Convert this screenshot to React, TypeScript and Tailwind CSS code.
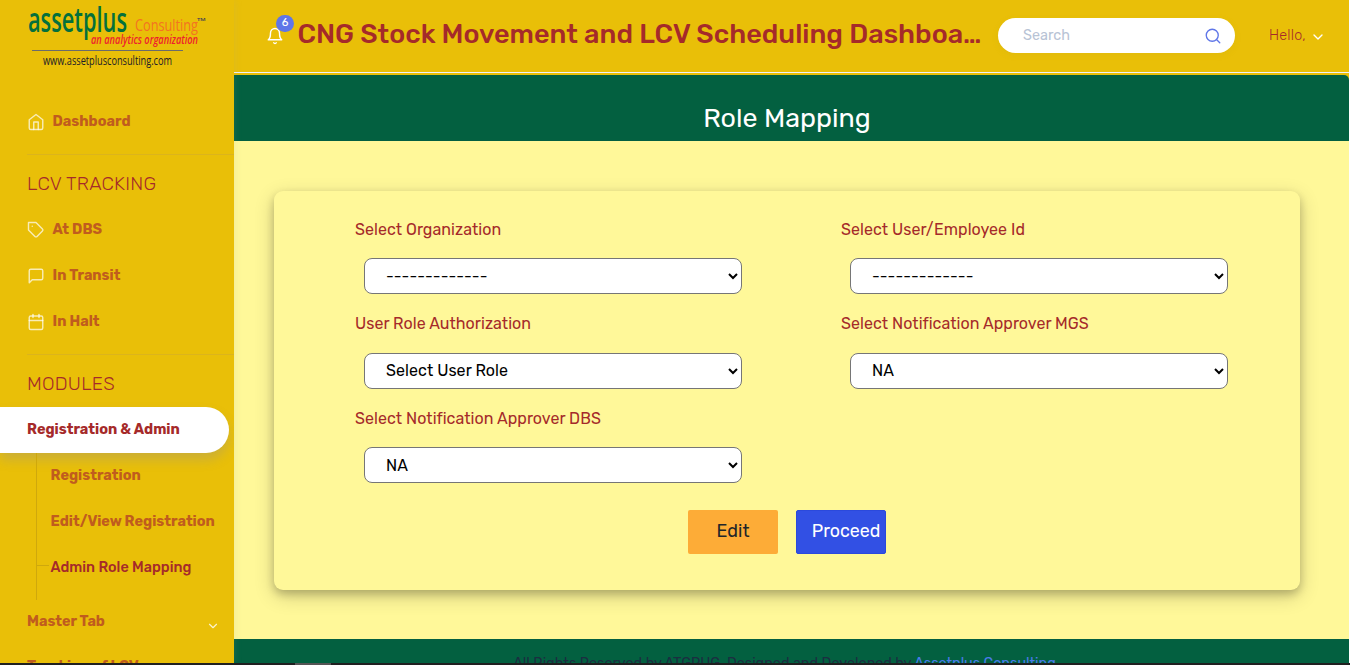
import type { ReactNode } from 'react';
import { FiBell, FiCalendar, FiChevronDown, FiHome, FiMessageSquare, FiSearch, FiTag } from 'react-icons/fi';

function Logo() {
  return (
    <svg width="190" height="72" viewBox="0 0 190 72" className="block overflow-visible" fontFamily='"Open Sans", sans-serif'>
      <text x="0" y="32" fontSize="34.5" fontWeight="600" fill="#04703c" textLength="99" lengthAdjust="spacingAndGlyphs">assetplus</text>
      <text x="107" y="30.5" fontSize="16" fill="#f47321" textLength="63" lengthAdjust="spacingAndGlyphs">Consulting</text>
      <text x="169" y="24" fontSize="8.5" fill="#3b3b55" textLength="9" lengthAdjust="spacingAndGlyphs">™</text>
      <text x="63" y="43.5" fontSize="12" fontStyle="italic" fontWeight="600" fill="#ee1c2e" textLength="107" lengthAdjust="spacingAndGlyphs">an analytics organization</text>
      <rect x="4" y="50" width="151" height="1" fill="#6b6b6b" />
      <text x="15" y="64.5" fontSize="12.5" fontWeight="500" fill="#1c1c28" textLength="129" lengthAdjust="spacingAndGlyphs">www.assetplusconsulting.com</text>
    </svg>
  );
}

function NavItem({ icon, children }: { icon: ReactNode; children: ReactNode }) {
  return (
    <a className="flex h-[46px] items-center gap-[7.5px] pl-[27px] text-[14.4px] font-bold text-[#c05c1e]">
      <span className="pt-[2px] text-white/70">{icon}</span>
      <span className="pt-px">{children}</span>
    </a>
  );
}

function Sidebar() {
  return (
    <aside className="relative z-10 w-[234px] shrink-0 overflow-hidden bg-[#e9bf08] shadow-[0_0_8px_rgba(154,161,171,0.18)]">
      <div className="h-[98px] pl-[28px]">
        <Logo />
      </div>
      <NavItem icon={<FiHome size={18} strokeWidth={1.9} />}>Dashboard</NavItem>
      <hr className="mt-[10px] ml-[27px] border-[#dcb41c]" />
      <h2 className="mt-[15px] h-[28px] pl-[27px] text-[19px] leading-7 font-light tracking-[0.2px] text-[#a52a2a]">LCV TRACKING</h2>
      <div className="pt-[8px]">
        <NavItem icon={<FiTag size={18} strokeWidth={1.9} />}>At DBS</NavItem>
        <NavItem icon={<FiMessageSquare size={18} strokeWidth={1.9} />}>In Transit</NavItem>
        <NavItem icon={<FiCalendar size={18} strokeWidth={1.9} />}>In Halt</NavItem>
      </div>
      <hr className="mt-[10px] ml-[27px] border-[#dcb41c]" />
      <h2 className="mt-[15px] h-[28px] pl-[27px] text-[19px] leading-7 font-light tracking-[0.2px] text-[#a52a2a]">MODULES</h2>
      <a className="mt-[9px] flex h-[46px] w-[229px] items-center rounded-r-full bg-white pl-[27px] text-[14.45px] font-bold text-[#a52a2a] shadow-[0_7px_12px_rgba(95,118,232,0.21)]">
        Registration &amp; Admin
      </a>
      <ul className="ml-[36px] h-[147px] border-l border-[#cfa80c] text-[14.45px] leading-[45px] font-bold text-[#c05c1e]">
        <li className="h-[46px] pl-[13.5px]">Registration</li>
        <li className="h-[46px] pl-[13.5px]">Edit/View Registration</li>
        <li className="flex h-[46px] items-center gap-[1.5px] font-medium text-[#a52a2a]">
          <span className="mb-[6px] h-px w-[12px] bg-[#cfa80c]" />
          <span className="h-[46px]">Admin Role Mapping</span>
        </li>
      </ul>
      <div className="flex h-[42px] items-center justify-between pr-[14px] pl-[27px] text-[14.4px] font-bold text-[#c05c1e]">
        <span className="pt-[2px]">Master Tab</span>
        <FiChevronDown size={14} className="mt-[9px] text-white/80" />
      </div>
      <div className="mt-[14px] pl-[27px] text-[14.4px] font-bold whitespace-nowrap text-[#c05c1e]">Tracking of LCV</div>
    </aside>
  );
}

function Header() {
  return (
    <header className="flex h-[73px] items-start border-b border-[#edf2f9] pl-[32px]">
      <div className="relative mt-[27px] text-white">
        <FiBell size={18} strokeWidth={1.9} />
        <span className="absolute top-[-12px] left-[10px] flex h-[17px] w-[18px] items-center justify-center rounded-full bg-[#5f76e8] text-[11px] font-normal">6</span>
      </div>
      <h1 className="mt-[14px] ml-[13.5px] w-[686.5px] truncate text-[27.05px] leading-10 font-medium text-[#a52a2a]">
        CNG Stock Movement and LCV Scheduling Dashboard
      </h1>
      <div className="mt-[18px] ml-[14px] flex h-[35px] w-[237px] shrink-0 items-center justify-between rounded-full bg-white pr-[13px] pl-[25px] text-[14.4px] text-[#b8c3d5] shadow-[0_2px_6px_rgba(180,160,40,0.15)]">
        Search
        <FiSearch size={18} strokeWidth={1.8} className="text-[#5f76e8]" />
      </div>
      <div className="mt-[25px] ml-[34px] flex items-center gap-[4px] text-[14.4px] font-light tracking-[0.2px] text-[#a52a2a]">
        Hello,
        <FiChevronDown size={16} className="mt-[2px] text-white" />
      </div>
    </header>
  );
}

function Field({ label, option }: { label: string; option: string }) {
  return (
    <div className="h-[94.5px]">
      <label className="block text-[16px] leading-6 tracking-[0.04px] text-[#a52a2a]">{label}</label>
      <select className="mt-[16.5px] ml-[9px] block h-[36px] w-[378px] rounded-[8px] border border-[#767676] bg-white pl-[17px] text-[16px] font-normal tracking-[0.06px] text-black">
        <option>{option}</option>
      </select>
    </div>
  );
}

export default function App() {
  return (
    <div className="flex h-[665px] w-[1350px] flex-col overflow-hidden bg-white font-[Rubik,Roboto,sans-serif]">
      <div className="flex h-[663px] overflow-hidden">
        <Sidebar />
        <main className="w-[1115px] overflow-hidden bg-[#e9bf08]">
          <Header />
          <div className="mt-[2px] h-[66px] rounded-tr-[5px] bg-[#036040] pt-[22px] text-center text-[26.8px] leading-[42px] text-white">
            <span className="pr-[9px]">Role Mapping</span>
          </div>
          <div className="h-[498px] bg-[#fff899] px-[40px] pt-[50px]">
            <section className="h-[399px] w-[1026px] rounded-[9px] pt-[26.5px] pl-[81px] shadow-[0_4px_8px_rgba(0,0,0,0.2),0_6px_20px_rgba(0,0,0,0.19)]">
              <div className="grid grid-cols-[486px_400px]">
                <Field label="Select Organization" option="-------------" />
                <Field label="Select User/Employee Id" option="-------------" />
                <Field label="User Role Authorization" option="Select User Role" />
                <Field label="Select Notification Approver MGS" option="NA" />
                <Field label="Select Notification Approver DBS" option="NA" />
              </div>
              <div className="mt-[9px] ml-[333px] flex gap-[18px] text-[18px]">
                <button className="h-[44px] w-[90px] rounded-[2px] bg-[#fdac37] pb-[1px] text-[#212529]">Edit</button>
                <button className="h-[44px] w-[90px] rounded-[2px] border border-[#2b49dc] bg-[#3250e4] pb-[1px] pl-[10px] text-[17.8px] text-white">Proceed</button>
              </div>
            </section>
          </div>
          <footer className="bg-[#036040] pt-[13px] text-center text-[14.35px] leading-6 whitespace-nowrap text-[#1c2d41]">
            <span className="pr-[14px]">
              All Rights Reserved by ATGPUG. Designed and Developed by <a className="text-[#4a7bea]">Assetplus Consulting</a>
            </span>
          </footer>
        </main>
      </div>
      <div className="h-[2px] bg-[#202020] pl-[295px]">
        <div className="h-[2px] w-[36px] bg-[#555]" />
      </div>
    </div>
  );
}
